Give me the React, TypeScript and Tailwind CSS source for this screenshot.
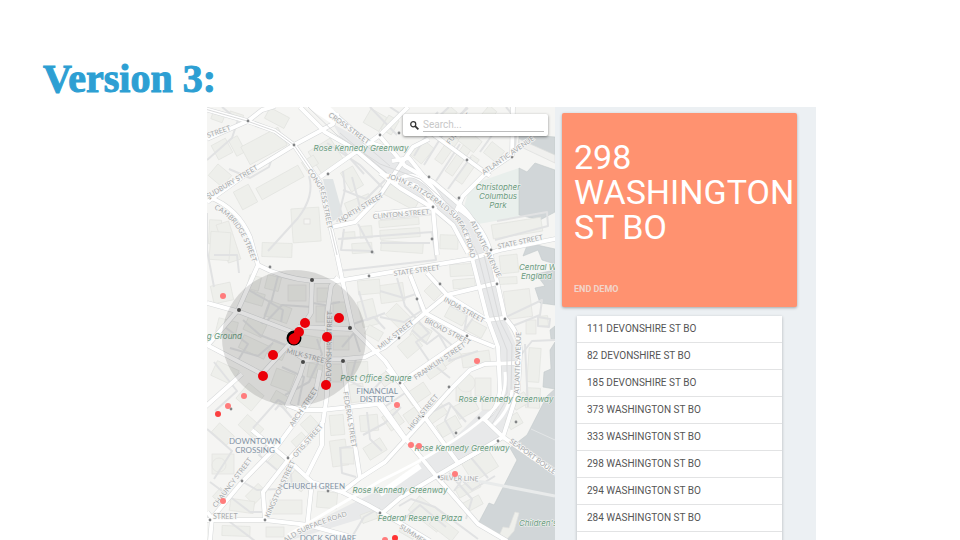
import React from "react";

const addresses = [
  "111 DEVONSHIRE ST BO",
  "82 DEVONSHIRE ST BO",
  "185 DEVONSHIRE ST BO",
  "373 WASHINGTON ST BO",
  "333 WASHINGTON ST BO",
  "298 WASHINGTON ST BO",
  "294 WASHINGTON ST BO",
  "284 WASHINGTON ST BO",
  "262 WASHINGTON ST BO",
];

// x, y, width, height, rotation
const buildings: number[][] = [
  [212, 112, 12, 9, 20], [229, 113, 14, 6, 18], [214, 141, 16, 16, -28], [232, 137, 10, 18, -28], [211, 168, 18, 15, 40],
  [243, 136, 42, 20, -28], [266, 112, 22, 12, 28], [256, 176, 48, 13, -29], [237, 187, 17, 20, -28], [292, 208, 28, 34, -4],
  [313, 143, 26, 26, -32], [303, 158, 14, 10, -32], [341, 172, 22, 14, 60], [346, 198, 26, 14, -22], [366, 112, 18, 16, 30],
  [384, 117, 12, 16, 30], [209, 220, 12, 24, 3], [222, 222, 13, 40, -18], [210, 232, 20, 28, 4], [262, 243, 30, 14, 2],
  [343, 232, 12, 7, -4], [360, 226, 12, 12, -4], [379, 219, 40, 7, -5], [380, 229, 40, 9, -4], [352, 243, 20, 10, -4],
  [381, 242, 42, 10, 4], [385, 190, 34, 13, 28], [412, 144, 20, 15, -50], [432, 145, 30, 9, -55], [442, 156, 32, 9, -55],
  [452, 165, 30, 9, -55], [432, 114, 26, 10, -50], [460, 134, 20, 14, 38], [475, 112, 22, 10, -50], [486, 145, 16, 14, 38],
  [492, 221, 50, 14, -9], [440, 235, 18, 14, 2], [505, 290, 26, 28, -7], [526, 320, 10, 14, 0], [538, 316, 10, 10, -5],
  [500, 255, 18, 18, -6], [499, 277, 18, 7, -3], [528, 348, 12, 34, 4], [526, 388, 14, 20, 3], [450, 264, 24, 12, -3],
  [453, 279, 22, 9, -5], [380, 284, 24, 18, -8], [388, 308, 20, 16, 45], [412, 326, 18, 14, 28], [400, 338, 20, 16, -40],
  [446, 310, 20, 12, 28], [468, 323, 17, 12, 28], [427, 284, 14, 14, 45], [440, 350, 20, 12, -34], [425, 363, 20, 12, -34],
  [462, 352, 28, 14, -8], [380, 372, 14, 12, -35], [407, 387, 22, 14, -34], [456, 383, 15, 18, 0], [475, 378, 16, 18, 0],
  [482, 400, 16, 10, 0], [212, 284, 20, 18, -12], [248, 276, 12, 14, 14], [266, 276, 14, 14, 14], [246, 292, 18, 12, 16],
  [288, 285, 18, 16, 0], [266, 304, 24, 16, 20], [317, 288, 12, 14, 0], [316, 306, 9, 16, 0], [217, 320, 20, 14, 14],
  [245, 320, 20, 14, 25], [240, 340, 28, 14, 25], [270, 342, 16, 16, 25], [300, 336, 20, 12, 10], [333, 302, 13, 18, 0],
  [333, 336, 16, 14, 0], [308, 364, 14, 14, 10], [331, 364, 11, 18, 0], [348, 362, 20, 16, -3], [350, 384, 14, 18, -8],
  [273, 371, 20, 18, 20], [213, 365, 24, 16, 25], [240, 387, 20, 20, 40], [272, 394, 18, 12, 30], [360, 300, 16, 26, -14],
  [358, 280, 22, 14, -5], [366, 328, 16, 10, 30], [303, 418, 14, 14, -42], [330, 415, 14, 20, -5], [331, 440, 16, 26, -8],
  [360, 415, 18, 16, -5], [341, 448, 13, 16, 0], [365, 442, 20, 14, -32], [385, 411, 16, 17, -35], [213, 428, 20, 12, 42],
  [240, 420, 22, 14, 42], [212, 454, 22, 20, 0], [270, 455, 16, 14, 42], [289, 474, 18, 14, 35], [247, 488, 18, 12, -45],
  [230, 500, 24, 12, 8], [222, 526, 28, 10, 2], [270, 500, 32, 14, 0], [317, 492, 20, 16, 5], [294, 435, 14, 14, -42],
  [215, 490, 12, 12, -48], [266, 527, 18, 10, 0], [405, 410, 14, 12, -35], [425, 404, 20, 16, -35], [438, 420, 22, 13, -30],
  [455, 401, 22, 14, -28], [410, 505, 36, 18, 38], [430, 522, 28, 12, 38], [465, 454, 30, 22, -32], [456, 483, 24, 10, -28],
  [462, 499, 20, 10, -28], [400, 527, 16, 9, 30], [512, 395, 16, 12, -30], [507, 415, 14, 12, -30], [361, 512, 16, 9, -20],
];

const minorRoads = [
  "M222 107L238 120L232 138L207 160", "M229 169L250 178L269 167L272 158", "M309 176Q315 196 298 218L268 251",
  "M343 171L345 190L337 222", "M343 190L366 199L385 180", "M352 177L360 207", "M327 143L360 165L385 190",
  "M340 147L364 174", "M207 213L207 250L214 287", "M214 255L237 255L239 273", "M344 229L341 250L372 251",
  "M358 224L374 254", "M338 239L432 232L436 260L338 271", "M380 219L435 214", "M380 243L430 243",
  "M414 156L436 119L449 107", "M424 165L450 123L468 108", "M436 181L460 144", "M448 189L471 157",
  "M448 130L467 107", "M480 152L500 124L509 118", "M390 107L423 129L438 112", "M370 107L397 135",
  "M278 276L271 303L283 310L281 322", "M245 288L270 302L262 324", "M265 323L282 305L312 307",
  "M243 320L260 335L285 345", "M222 325L248 344L237 362", "M230 348L258 356L273 343", "M313 303L330 306",
  "M330 323L330 304L340 302", "M345 296L350 325L374 317L385 329", "M359 291L367 320L385 313",
  "M342 347L354 333L360 352", "M317 339L322 354L309 382L285 395", "M282 367L304 377L298 405",
  "M356 359L350 381L371 392L385 377", "M380 317L404 322L421 311L413 284", "M380 291L404 298L419 293",
  "M397 278L405 306L429 333L416 342L429 361L450 378", "M412 330L427 344L439 335L450 354",
  "M437 318L463 332L476 314", "M450 305L467 314L464 333", "M431 327L454 347L449 361L478 351",
  "M392 371L408 391L380 410", "M214 362L237 391L215 411", "M257 433L268 443L259 455L277 470",
  "M243 482L257 490L278 489L286 475", "M210 482L233 499L250 512L263 512", "M290 467L292 485L308 487",
  "M207 429L232 451L214 479", "M253 428L278 400L300 412", "M275 410L280 404L292 418", "M340 447L342 473L356 477",
  "M340 448L355 446", "M401 407L385 423L363 435", "M367 412L370 439L382 451", "M428 414L449 403L466 422",
  "M451 405L445 420L456 439", "M468 454L488 478", "M449 473L472 499L466 519", "M454 491L462 480L472 490L495 476",
  "M399 506L411 499L435 507L478 539", "M404 519L420 505L446 527", "M510 327L540 315L542 300L506 317",
  "M538 317L550 319L549 327L538 326L538 317", "M525 344L528 407", "M520 356L532 341L555 340",
  "M495 240L548 226L547 212L497 221", "M506 107L517 120L515 148L506 160", "M226 519L255 541", "M350 540L364 517L380 508",
];

const roads = [
  "M205 109L247 121L275 131L294 145L320 183L330 225L337 255L347 302L353 329L385 361L405 390L458 463L485 448",
  "M207 202L245 175L294 145L333 124L338 113", "M207 139L248 121L262 110L275 106",
  "M209 197Q238 208 250 237L258 265L238 310L208 345", "M258 265Q282 278 312 281L338 281L385 273L470 259L500 250L560 238",
  "M207 303L240 312L295 333", "M207 345L262 374L295 338L311 313L312 281", "M298 327L352 329",
  "M285 347L306 360L343 359L365 357L385 347L425 313L447 295L497 283", "M338 277L331 286L327 315L327 395L323 422L288 460L263 492L265 520",
  "M343 359L348 400L360 478", "M304 362L300 375L287 405L300 410L322 410L378 404L405 440",
  "M320 370L315 395L278 445L242 482L212 518L210 541", "M322 422L322 445L307 475",
  "M252 430L288 460L312 482L342 492L368 505L400 523L430 541", "M205 520L265 520L308 525L348 536", "M312 482L307 528",
  "M342 492L360 478L385 462L405 440L425 418L452 388L470 370L485 364L518 363",
  "M400 383L467 337", "M400 383L387 369", "M410 275L425 313L470 337L495 347",
  "M427 273L447 295L487 320L503 318", "M466 230L470 250L487 317L498 347L500 390Q497 414 482 420",
  "M457 208Q481 222 490 250L505 318Q521 334 520 354L518 390L503 437",
  "M380 402L405 438L437 477L478 524L507 541", "M378 134L405 166L433 182L460 205Q478 222 484 248",
  "M380 173L400 188L433 208L453 225L468 253", "M513 107L512 155L487 172L463 196L453 218",
  "M430 132L490 176", "M300 107L325 132L353 148L385 175L417 186L436 209", "M320 177L380 135L408 107",
  "M332 227L355 222L378 198L399 167L413 147L429 139", "M375 214L433 208L437 255",
  "M380 515L400 498L450 468L503 437", "M483 418L503 437L555 473", "M332 112L365 141L395 151",
  "M392 161L409 158L429 183L444 204", "M395 184Q413 160 444 204", "M207 512L212 518", "M205 407L242 374",
];

const water = [
  "M519 134L555 137V155L519 143Z", "M519 168L527 172L535 163L555 170V212L540 220L519 215Z",
  "M523 256L528 243L555 249V264L542 260L538 250Z", "M536 274L555 270V305L540 303L535 288L545 286Z",
  "M544 372L551 369L550 350L555 342V389L543 387Z", "M550 330L555 326V340L551 339Z",
  "M547 396L527 435L510 448L517 460L494 505L489 503L479 522L493 532L507 541H556V388Z",
];

const nodes = [
  [248, 121], [294, 145], [328, 174], [210, 198], [345, 220], [372, 252], [380, 196], [380, 135], [399, 133], [429, 177],
  [459, 198], [512, 157], [467, 160], [433, 207], [432, 239], [491, 250], [270, 267], [369, 276], [440, 284], [417, 299],
  [497, 284], [505, 319], [399, 338], [467, 336], [400, 383], [449, 387], [231, 409], [288, 458], [242, 481], [328, 491],
  [265, 520], [210, 520], [423, 416], [456, 433], [479, 418], [516, 422], [498, 441], [439, 477], [380, 513],
];
const darkNodes = [[312, 280], [239, 310], [350, 328], [303, 362], [343, 361]];
const hits = [[305, 323], [299, 332], [295, 338], [339, 318], [327, 337], [273, 355], [263, 376], [326, 385]];
const faded = [[223, 296], [477, 361], [397, 405], [244, 396], [228, 406], [411, 445], [419, 446], [455, 474], [223, 501], [385, 540]];

// text, x, y, angle
const streets: [string, number, number, number][] = [
  ["STREET", 208, 138, -20], ["SUDBURY STREET", 208, 199, -31], ["CROSS STREET", 328, 116, 36], ["NORTH STREET", 340, 223, -31],
  ["CLINTON STREET", 373, 219, -5], ["STATE STREET", 394, 276, -8], ["STATE STREET", 498, 249, -12],
  ["ATLANTIC AVENUE", 484, 175, -35], ["ATLANTIC AVENUE", 470, 222, 64], ["INDIA STREET", 443, 301, 29],
  ["BROAD STREET", 424, 322, 27], ["FRANKLIN STREET", 416, 380, -34], ["MILK STREET", 380, 350, -38],
  ["MILK STREET", 286, 353, 15], ["DEVONSHIRE STREET", 331, 382, -89], ["FEDERAL STREET", 343, 392, 81],
  ["ARCH STREET", 293, 427, -56], ["OTIS STREET", 296, 458, -49], ["CHAUNCY STREET", 216, 508, -53],
  ["KINGSTON STREET", 269, 518, -65], ["HIGH STREET", 411, 431, -51], ["SILVER LINE", 440, 480, 2],
  ["SEAPORT BOULEVARD", 509, 442, 36], ["SUMMER STREET", 399, 528, 33], ["STREET", 213, 519, 0],
  ["ATLANTIC AVENUE", 519, 394, -88], ["FULTON ST", 450, 145, -55],
];
const parks: [string, number, number][] = [
  ["Rose Kennedy Greenway", 361, 151], ["Christopher", 498, 190], ["Columbus", 498, 199], ["Park", 498, 208],
  ["Post Office Square", 376, 381], ["Rose Kennedy Greenway", 506, 402], ["Rose Kennedy Greenway", 462, 451],
  ["Rose Kennedy Greenway", 400, 493], ["Federal Reserve Plaza", 420, 521],
];
const districts: [string, number, number][] = [
  ["FINANCIAL", 377, 394], ["DISTRICT", 377, 402], ["DOWNTOWN", 255, 444], ["CROSSING", 255, 453],
  ["CHURCH GREEN", 314, 489], ["DOCK SQUARE", 328, 541],
];

function CityMap() {
  return (
    <svg
      viewBox="207 107 348 433"
      preserveAspectRatio="xMinYMin slice"
      className="absolute inset-0 h-full w-full"
      role="img"
      aria-label="Map of downtown Boston"
    >
      <rect x="200" y="100" width="1200" height="1200" fill="#f5f5f3" />
      <path d="M470 185L519 168V217L478 224L464 207Z" fill="#e9efec" />
      <path d="M333 124L365 141L410 162L460 205L489 250L506 322L518 350V385L504 437L395 500L380 513L288 541L305 527L385 487L447 445L498 395V347L470 250L450 225L400 188L345 145Z" fill="#e8e9ea" />
      <path d="M323 179L333 179L343 215L332 222Z" fill="#e0e4e5" />
      {water.map((d) => <path key={d} d={d} fill="#d1d6d8" stroke="#c3c9cb" strokeWidth=".6" />)}
      <g fill="#eeefeb" stroke="#e2e3df" strokeWidth=".7">
        {buildings.map(([x, y, w, h, r], i) => (
          <rect key={i} x={x} y={y} width={w} height={h} transform={`rotate(${r} ${x + w / 2} ${y + h / 2})`} />
        ))}
        <circle cx="219" cy="465" r="7" />
        <circle cx="466" cy="383" r="9" />
        <path d="M509 528L515 512L519 513L514 531L507 539L499 536L503 527Z" />
      </g>
      <rect x="304" y="219" width="6" height="5" fill="#f5f5f3" stroke="#dcddda" strokeWidth=".7" />
      <g fill="none" stroke="#e1e2e3" strokeWidth="2" strokeLinejoin="round">
        {minorRoads.map((d) => <path key={d} d={d} />)}
      </g>
      <g fill="none" stroke="#d5d7d8" strokeWidth="5" strokeLinejoin="round">
        {roads.map((d) => <path key={d} d={d} />)}
      </g>
      <g fill="none" stroke="#fff" strokeWidth="4" strokeLinejoin="round">
        {roads.map((d) => <path key={d} d={d} />)}
      </g>
      <path d="M302 104L332 124L336 112L327 104Z" fill="#fff" />
      <g fill="none" stroke="#d9dadb" strokeWidth="1">
        <path d="M205 109L247 121L275 131L294 145L320 183L330 225L337 255" />
        <path d="M308 107L337 135L380 164L420 179L457 212L478 255L494 317L507 350L507 393L488 420" />
        <path d="M484 255L500 321L512 345L511 392L492 424" />
        <path d="M340 133L387 173M362 142L390 166" />
      </g>
      <g fill="none" stroke="#fff" strokeWidth="3">
        <path d="M505 372Q508 400 488 414Q455 445 380 481L288 535" />
        <path d="M512 390Q510 410 494 425" />
        <path d="M380 494L420 466" strokeWidth="6" />
      </g>
      <path d="M438 477L483 482L555 496" fill="none" stroke="#e9ebeb" strokeWidth="3" />
      <path d="M531 429L555 440" fill="none" stroke="#e2e5e6" strokeWidth="1" />
      <path d="M519 146L555 163V155L519 139Z" fill="#f0f0ee" stroke="#dcdedd" strokeWidth=".7" />
      <g fill="#828486">
        {nodes.map(([x, y], i) => <circle key={i} cx={x} cy={y} r="1.4" />)}
      </g>
      <g fill="#a6a9ab" stroke="#f7f7f6" strokeWidth="1.5" paintOrder="stroke" fontSize="7" className="font-['Lato','Open_Sans',sans-serif]">
        {streets.map(([t, x, y, a], i) => (
          <text key={i} x={x} y={y} transform={`rotate(${a} ${x} ${y})`}>{t}</text>
        ))}
        <path id="cambridge" d="M214 209Q240 219 254 268" fill="none" stroke="none" />
        <text><textPath href="#cambridge">CAMBRIDGE STREET</textPath></text>
        <path id="congress" d="M307 171L320 190L331 245" fill="none" stroke="none" />
        <text><textPath href="#congress">CONGRESS STREET</textPath></text>
        <path id="surface" d="M387 178L402 183Q449 208 459 225Q468 240 474 275" fill="none" stroke="none" />
        <text><textPath href="#surface">JOHN F. FITZGERALD SURFACE ROAD</textPath></text>
        <path id="surfaceSouth" d="M286 543Q305 527 365 511" fill="none" stroke="none" />
        <text><textPath href="#surfaceSouth">ALD SURFACE ROAD</textPath></text>
      </g>
      <g fill="#6b9b80" stroke="#f3f5f3" strokeWidth="1" paintOrder="stroke" fontSize="8" fontStyle="italic" className="font-['Inter','Open_Sans',sans-serif]">
        {parks.map(([t, x, y], i) => <text key={i} x={x} y={y} textAnchor="middle">{t}</text>)}
        <text x="519" y="270">Central Wharf</text>
        <text x="521" y="279">England</text>
        <text x="519" y="526">Children's</text>
        <text x="242" y="339" textAnchor="end">Burying Ground</text>
      </g>
      <g fill="#8292a3" stroke="#f5f6f6" strokeWidth="1.5" paintOrder="stroke" fontSize="8" className="font-['Lato','Open_Sans',sans-serif]">
        {districts.map(([t, x, y]) => <text key={t} x={x} y={y} textAnchor="middle">{t}</text>)}
      </g>
      <ellipse cx="294" cy="338" rx="72" ry="68" fill="#000" fillOpacity=".12" />
      <g fill="#484848">
        {darkNodes.map(([x, y], i) => <circle key={i} cx={x} cy={y} r="2" />)}
      </g>
      <g fill="#ff7c7c">
        {faded.map(([x, y], i) => <circle key={i} cx={x} cy={y} r="3" />)}
      </g>
      <circle cx="218" cy="414" r="3" fill="#fb4040" />
      <circle cx="395" cy="538" r="3" fill="#f33" />
      <circle cx="294" cy="338" r="7.5" fill="#000" />
      <g fill="#eb0009">
        {hits.map(([x, y], i) => <circle key={i} cx={x} cy={y} r="5" />)}
        <circle cx="294" cy="339" r="5.5" />
      </g>
    </svg>
  );
}

export default function App() {
  return (
    <div className="flex h-screen flex-col overflow-hidden bg-white">
      <h1 className="px-[43px] pt-[55px] pb-1 font-['Liberation_Serif',serif] text-[40px] leading-[48px] font-black text-[#2d9fd3] [-webkit-text-stroke:1px_#2d9fd3]">
        Version 3:
      </h1>
      <main className="mr-[144px] ml-[207px] flex min-h-0 flex-1 bg-[#ecf0f3] font-['Roboto',sans-serif]">
        <section className="relative min-w-0 flex-1 overflow-hidden">
          <CityMap />
          <label className="absolute top-[7px] right-[7px] flex h-[22px] w-[145px] items-center gap-1 rounded-[2px] bg-white pr-1 pl-[7px] shadow-[0_1px_3px_rgba(0,0,0,0.45)]">
            <svg viewBox="0 0 10 10" className="size-[9px] shrink-0" fill="none" stroke="#333">
              <circle cx="3.6" cy="3.6" r="2.8" strokeWidth="1.4" />
              <path d="M5.7 5.7L9.3 9.3" strokeWidth="2" />
            </svg>
            <input
              type="text"
              aria-label="Search"
              placeholder="Search..."
              className="h-[14px] min-w-0 flex-1 border-b border-[#bdbdbd] text-[10px] leading-[13px] outline-none placeholder:text-[#c8c8c8]"
            />
          </label>
        </section>
        <aside className="w-[261px] shrink-0 pt-[6px] pr-[19px] pl-[7px]">
          <section className="rounded-[2px] bg-[#ff9270] shadow-[0_1px_3px_rgba(0,0,0,0.3)]">
            <h2 className="px-3 pt-[27px] pb-[39px] text-[34px] leading-[35px] text-white">298 WASHINGTON ST BO</h2>
            <div className="flex h-[23px] items-start px-3">
              <button type="button" className="text-[9px] leading-[10px] font-bold text-[#f2d5ca]">END DEMO</button>
            </div>
          </section>
          <ul className="mt-[9px] mr-[15px] ml-[15px] bg-white shadow-[0_1px_3px_rgba(0,0,0,0.25)]">
            {addresses.map((address) => (
              <li key={address} className="flex h-[27px] items-center border-b border-[#e2e3e4] px-[10px] text-[10px] leading-3 text-[#555]">
                {address}
              </li>
            ))}
          </ul>
        </aside>
      </main>
    </div>
  );
}
